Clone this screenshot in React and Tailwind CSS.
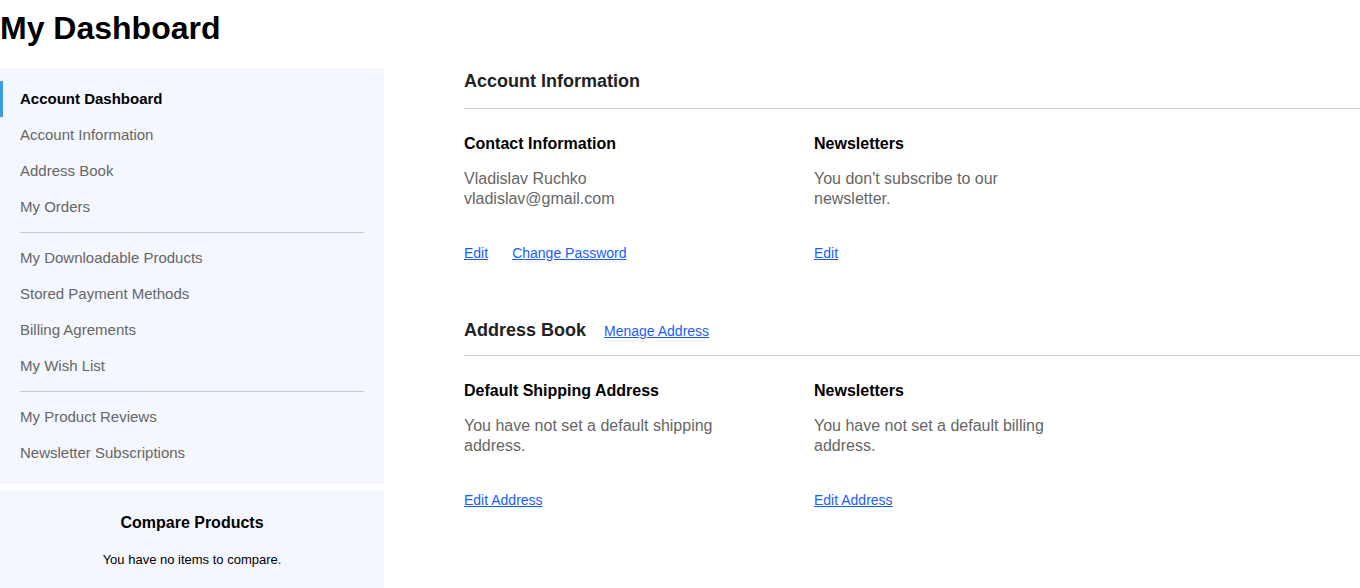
const menuGroups = [
  ['Account Dashboard', 'Account Information', 'Address Book', 'My Orders'],
  ['My Downloadable Products', 'Stored Payment Methods', 'Billing Agrements', 'My Wish List'],
  ['My Product Reviews', 'Newsletter Subscriptions'],
]

const InfoBlock = ({ title, children, links }) => (
  <div className="w-[350px]">
    <h3 className="text-[16px] leading-5 font-bold text-black">{title}</h3>
    <div className="mt-[15px] w-[256px] min-h-[40px] text-[16px] leading-5 text-[#666]">{children}</div>
    <div className="mt-[36px] flex gap-6 text-[14px] leading-4">
      {links.map((l) => (
        <a key={l} href="#" className="text-[#1a5cff] underline">
          {l}
        </a>
      ))}
    </div>
  </div>
)

const App = () => {
  return (
    <div className="min-h-screen bg-white font-['Liberation_Sans',Arial,sans-serif]">
      <h1 className="text-[32px] leading-[56px] font-bold text-black">My Dashboard</h1>

      <div className="mt-3 flex">
        {/* Sidebar */}
        <div className="w-[384px] shrink-0">
          <div className="bg-[#f4f7fe] pt-[13px] pb-[13px]">
            {menuGroups.map((group, gi) => (
              <div key={gi}>
                {gi > 0 && <div className="mx-5 my-[7px] border-t border-[#ccc]" />}
                {group.map((item) =>
                  item === 'Account Dashboard' ? (
                    <div
                      key={item}
                      className="h-[36px] flex items-center border-l-[3px] border-[#3d9be0] pl-[17px] text-[15px] font-bold text-black"
                    >
                      {item}
                    </div>
                  ) : (
                    <div key={item} className="h-[36px] flex items-center pl-5 text-[15px] text-[#666]">
                      {item}
                    </div>
                  )
                )}
              </div>
            ))}
          </div>
          <div className="mt-[7px] bg-[#f4f7fe] pt-[22px] pb-6 text-center">
            <h3 className="text-[16px] leading-5 font-bold text-black">Compare Products</h3>
            <p className="mt-[19px] text-[13px] leading-4 text-black">You have no items to compare.</p>
          </div>
        </div>

        {/* Main content */}
        <div className="flex-1 pl-20">
          <div className="border-b border-[#ccc] pt-px pb-[15px]">
            <h2 className="text-[18px] leading-6 font-bold text-[#222]">Account Information</h2>
          </div>
          <div className="mt-[25px] flex">
            <InfoBlock title="Contact Information" links={['Edit', 'Change Password']}>
              Vladislav Ruchko
              <br />
              vladislav@gmail.com
            </InfoBlock>
            <InfoBlock title="Newsletters" links={['Edit']}>
              You don't subscribe to our newsletter.
            </InfoBlock>
          </div>

          <div className="mt-[57px] flex items-baseline gap-[18px] border-b border-[#ccc] pb-[13px]">
            <h2 className="text-[18px] leading-6 font-bold text-[#222]">Address Book</h2>
            <a href="#" className="text-[14px] text-[#1a5cff] underline">
              Menage Address
            </a>
          </div>
          <div className="mt-[25px] flex">
            <InfoBlock title="Default Shipping Address" links={['Edit Address']}>
              You have not set a default shipping address.
            </InfoBlock>
            <InfoBlock title="Newsletters" links={['Edit Address']}>
              You have not set a default billing address.
            </InfoBlock>
          </div>
        </div>
      </div>
    </div>
  )
}

export default App
